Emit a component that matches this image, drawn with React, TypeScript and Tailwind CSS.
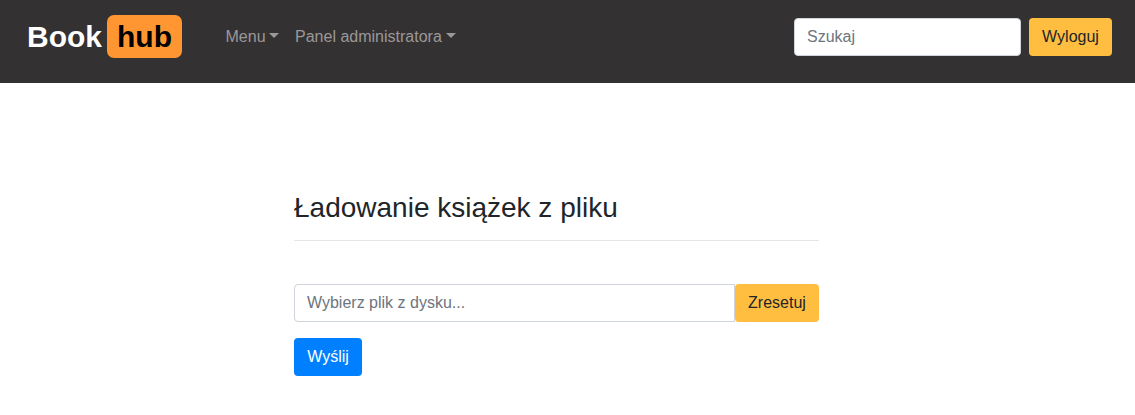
import React from "react";

function Caret() {
  return (
    <span className="mr-[-0.4px] mb-[3px] ml-[3.9px] h-0 w-0 border-x-[5px] border-t-[5px] border-x-transparent border-t-current" />
  );
}

function NavItem({ label }: { label: string }) {
  return (
    <a href="#" className="flex items-center px-2 text-[#9a9899]">
      {label}
      <Caret />
    </a>
  );
}

export default function App() {
  return (
    <div className="min-h-[415px] bg-white font-['Liberation_Sans',Arial,sans-serif] text-base leading-6 text-[#212529]">
      <header className="flex h-[83px] items-start bg-[#343132] pr-[23px] pl-[27px]">
        <div className="mt-[15px] flex h-[43px] items-center text-[30px] font-bold text-white">
          <span>Book</span>
          <span className="ml-[5px] flex h-[43px] w-[75px] items-center justify-center rounded-[7px] bg-[#ff9632] text-black">
            hub
          </span>
        </div>
        <nav className="mt-[25px] ml-[35.5px] flex">
          <NavItem label="Menu" />
          <NavItem label="Panel administratora" />
        </nav>
        <form className="mt-[18px] ml-auto flex gap-2">
          <input
            placeholder="Szukaj"
            className="h-[38px] w-[227px] rounded border border-[#ced4da] bg-white px-3 placeholder:text-[#6c757d]"
          />
          <button type="button" className="h-[38px] w-[83px] rounded bg-[#ffbe40]">
            Wyloguj
          </button>
        </form>
      </header>
      <main className="ml-[294px] w-[525px] pt-[108px]">
        <h3 className="text-[28px] leading-[33.6px]">Ładowanie książek z pliku</h3>
        <hr className="mt-[15px] border-black/10" />
        <div className="mt-[43px] flex">
          <div className="flex h-[38px] w-[441px] items-center rounded-l border border-[#ced4da] px-3 text-[#6c757d]">
            Wybierz plik z dysku...
          </div>
          <button className="h-[38px] w-[84px] rounded bg-[#ffbe40]">Zresetuj</button>
        </div>
        <button className="mt-4 h-[38px] w-[68px] rounded bg-[#0080ff] text-white">Wyślij</button>
      </main>
    </div>
  );
}
